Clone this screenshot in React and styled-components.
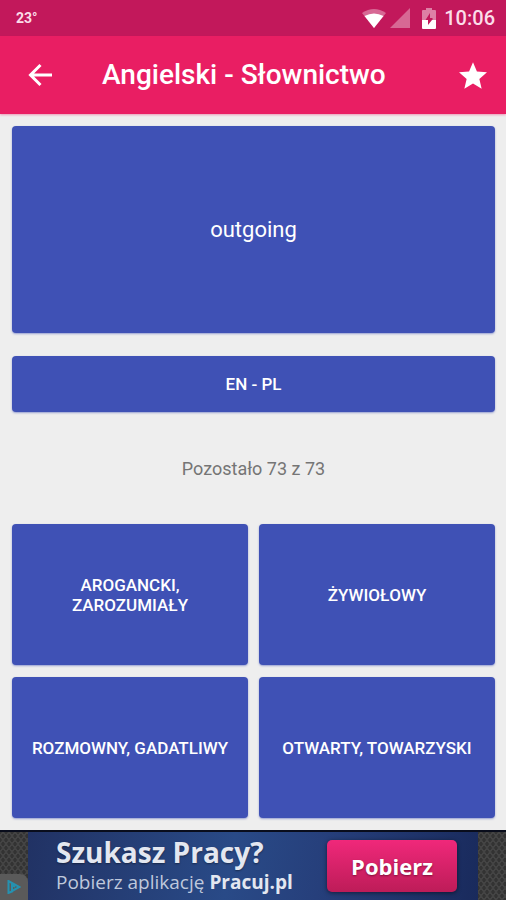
import styled, { createGlobalStyle } from "styled-components";

const answers = ["Arogancki, zarozumiały", "Żywiołowy", "Rozmowny, gadatliwy", "Otwarty, towarzyski"];

const WifiIcon = () => (
    <svg width="24" height="19" viewBox="0 0 24 19" aria-hidden="true">
        <path d="M12 19 L0 4 Q12 -4 24 4 Z" fill="#fff" fillOpacity="0.35" />
        <path d="M12 19 L2.5 7 Q12 2 21.5 7 Z" fill="#fff" />
    </svg>
);

const SignalIcon = () => (
    <svg width="20" height="20" viewBox="0 0 20 20" aria-hidden="true">
        <path d="M20 0 V20 H0 Z" fill="#fff" fillOpacity="0.35" />
    </svg>
);

const BatteryIcon = () => (
    <svg width="14" height="21" viewBox="0 0 14 21" aria-hidden="true">
        <path d="M4 0 H10 V2 H13 Q14 2 14 3 V12 H10.5 V10 H8 V5 L3.5 12 H0 V3 Q0 2 1 2 H4 Z" fill="#fff" fillOpacity="0.45" />
        <path d="M0 12 H6 V17 L10 12 H14 V20 Q14 21 13 21 H1 Q0 21 0 20 Z" fill="#fff" />
    </svg>
);

const BackIcon = () => (
    <svg width="24" height="24" viewBox="0 0 24 24" aria-hidden="true">
        <path d="M12.5 2 L2.5 12 L12.5 22 M2.5 12 H24" fill="none" stroke="#fff" strokeWidth="3" />
    </svg>
);

const StarIcon = () => (
    <svg width="28" height="27" viewBox="2 2 20 19" aria-hidden="true">
        <path d="M12 17.27 18.18 21l-1.64-7.03L22 9.24l-7.19-.61L12 2 9.19 8.63 2 9.24l5.46 4.73L5.82 21z" fill="#fff" />
    </svg>
);

const AdChoicesIcon = () => (
    <svg width="14" height="14" viewBox="0 0 14 14" fill="none" stroke="#2591b0" strokeWidth="2" aria-hidden="true">
        <path d="M6 11 L1.5 13 V1 L12.5 7 L5 11 V5 L8 7" />
    </svg>
);

const App = () => {

    return (
        <>
            <GlobalStyle />
            <Screen>
                <StatusBar>
                    <Temperature>23°</Temperature>
                    <StatusIcons>
                        <WifiIcon />
                        <SignalIcon />
                        <BatteryIcon />
                        <Clock>10:06</Clock>
                    </StatusIcons>
                </StatusBar>
                <AppBar>
                    <IconButton aria-label="Wstecz"><BackIcon /></IconButton>
                    <Title>Angielski - Słownictwo</Title>
                    <IconButton aria-label="Ulubione"><StarIcon /></IconButton>
                </AppBar>
                <Quiz>
                    <WordCard>outgoing</WordCard>
                    <BlueButton $height={56}>EN - PL</BlueButton>
                    <Remaining>Pozostało 73 z 73</Remaining>
                    <Answers>
                        {answers.map((answer) => (
                            <BlueButton key={answer} $height={141}>{answer}</BlueButton>
                        ))}
                    </Answers>
                </Quiz>
                <AdBanner>
                    <AdSide>
                        <AdChoices href="#adchoices" aria-label="AdChoices"><AdChoicesIcon /></AdChoices>
                    </AdSide>
                    <AdBody>
                        <AdText>
                            <h2>Szukasz Pracy?</h2>
                            <p>Pobierz aplikację <b>Pracuj.pl</b></p>
                        </AdText>
                        <AdButton>Pobierz</AdButton>
                    </AdBody>
                    <AdSide />
                </AdBanner>
            </Screen>
        </>
    )
}

const GlobalStyle = createGlobalStyle`
* {
    box-sizing: border-box;
}
body {
    margin: 0;
    background-color: #eee;
    font-family: Roboto, sans-serif;
}
h1, h2, p {
    margin: 0;
}
button {
    border: 0;
    font-family: inherit;
    cursor: pointer;
}
svg {
    display: block;
}
`

const Screen = styled.div`
min-height: 100vh;
display: flex;
flex-direction: column;
`

const StatusBar = styled.div`
display: flex;
align-items: center;
justify-content: space-between;
height: 36px;
padding: 0 11px 0 16px;
background-color: #c2185b;
color: #fff;
`

const Temperature = styled.span`
font-family: "Liberation Sans Narrow", Roboto, sans-serif;
font-size: 14px;
font-weight: 700;
color: #fbdde9;
`

const StatusIcons = styled.div`
display: flex;
align-items: center;
gap: 4px;

svg:nth-of-type(3){
    margin-left: 8px;
    margin-right: 4px;
}
`

const Clock = styled.span`
font-size: 20px;
font-weight: 500;
line-height: 24px;
color: #fbdde9;
`

const AppBar = styled.header`
display: flex;
align-items: center;
height: 78px;
padding: 0 9px 0 16px;
background-color: #e91e63;
box-shadow: 0 1px 2px rgba(233, 30, 99, 0.4);
color: #fff;
`

const IconButton = styled.button`
display: flex;
align-items: center;
justify-content: center;
width: 48px;
height: 48px;
padding: 0;
background: none;
`

const Title = styled.h1`
flex: 1;
padding-left: 38px;
font-size: 28px;
font-weight: 500;
line-height: 36px;
`

const Quiz = styled.main`
flex: 1;
display: flex;
flex-direction: column;
padding: 12px 11px 12px 12px;
`

const WordCard = styled.section`
display: flex;
align-items: center;
justify-content: center;
min-height: 207px;
margin-bottom: 23px;
border-radius: 4px;
background-color: #3f51b5;
box-shadow: 0 1px 2px rgba(63, 81, 181, 0.5);
color: #fff;
font-size: 22px;
`

const BlueButton = styled.button`
min-height: ${({ $height }) => $height}px;
padding: 0 16px;
border-radius: 4px;
background-color: #3f51b5;
box-shadow: 0 1px 2px rgba(63, 81, 181, 0.5);
color: #fff;
font-size: 17px;
font-weight: 500;
line-height: 20px;
text-transform: uppercase;
`

const Remaining = styled.p`
flex: 1;
display: flex;
align-items: center;
justify-content: center;
min-height: 80px;
color: #757575;
font-size: 18px;
`

const Answers = styled.div`
display: grid;
grid-template-columns: 1fr 1fr;
gap: 12px 11px;
`

const AdBanner = styled.aside`
display: flex;
height: 70px;
border-top: 2px solid #090d1c;
`

const AdSide = styled.div`
display: flex;
align-items: flex-end;
width: 28px;
background-color: #444;
background-image: radial-gradient(#333 35%, transparent 40%), radial-gradient(#333 35%, transparent 40%);
background-size: 6px 8px;
background-position: 0 0, 3px 4px;
`

const AdChoices = styled.a`
display: flex;
align-items: center;
justify-content: center;
width: 28px;
height: 26px;
border-radius: 0 8px 0 0;
background-color: #5a5a5a;
`

const AdBody = styled.div`
flex: 1;
display: flex;
align-items: center;
justify-content: space-between;
padding: 0 21px 0 28px;
background: linear-gradient(100deg, #213264, #294a87 45%, #263f7b 65%, #192a5c);
font-family: "Open Sans", sans-serif;
`

const AdText = styled.div`
color: #e3e7f0;
white-space: nowrap;

h2{
    font-size: 28px;
    font-weight: 700;
    line-height: 32px;
    text-shadow: 0 1px 2px rgba(0, 0, 0, 0.4);
}
p{
    color: #bfc8dc;
    font-size: 19px;
    line-height: 28px;
}
b{
    color: #e3e7f0;
}
`

const AdButton = styled.button`
width: 130px;
height: 52px;
padding: 0;
border-radius: 5px;
background-image: linear-gradient(#f0287a, #bd1c58);
box-shadow: 0 1px 4px rgba(0, 0, 0, 0.5);
color: #fff;
font-size: 22px;
font-weight: 700;
text-shadow: 0 1px 2px rgba(80, 0, 30, 0.6);
`

export default App
